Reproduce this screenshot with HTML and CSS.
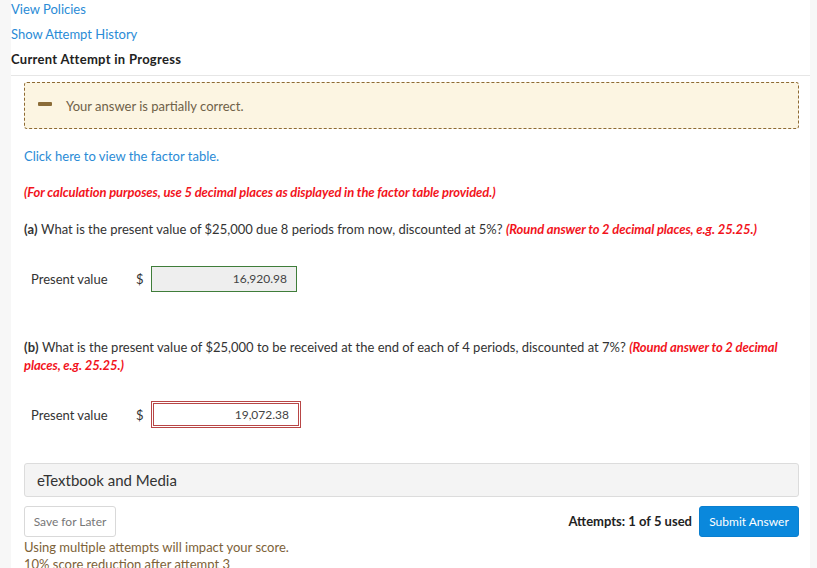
FILE: index.html
```html
<!DOCTYPE html>
<html>
<head>
<meta charset="utf-8">
<link rel="stylesheet" href="styles.css">
</head>
<body>
<div class="page">
  <div class="top">
    <a class="link top-item first">View Policies</a>
    <a class="link top-item">Show Attempt History</a>
    <div class="top-item current">Current Attempt in Progress</div>
  </div>
  <div class="content">
    <div class="alert">
      <span class="minus"></span>
      <span class="alert-text">Your answer is partially correct.</span>
    </div>
    <a class="link factor">Click here to view the factor table.</a>
    <p class="note">(For calculation purposes, use 5 decimal places as displayed in the factor table provided.)</p>
    <p class="question"><b>(a)</b> What is the present value of $25,000 due 8 periods from now, discounted at 5%? <span class="hint">(Round answer to 2 decimal places, e.g. 25.25.)</span></p>
    <div class="answer-row row-a">
      <span class="label">Present value</span>
      <span class="dollar">$</span>
      <div class="input correct">16,920.98</div>
    </div>
    <p class="question qb"><b>(b)</b> What is the present value of $25,000 to be received at the end of each of 4 periods, discounted at 7%? <span class="hint">(Round answer to 2 decimal places, e.g. 25.25.)</span></p>
    <div class="answer-row row-b">
      <span class="label">Present value</span>
      <span class="dollar">$</span>
      <div class="input wrong">19,072.38</div>
    </div>
    <div class="media">eTextbook and Media</div>
    <div class="actions">
      <button class="btn save">Save for Later</button>
      <div class="right">
        <span class="attempts">Attempts: 1 of 5 used</span>
        <button class="btn submit">Submit Answer</button>
      </div>
    </div>
    <p class="warn">Using multiple attempts will impact your score.<br>10% score reduction after attempt 3</p>
  </div>
</div>
</body>
</html>
```
FILE: styles.css
```css
html, body {
  margin: 0;
  padding: 0;
  overflow: hidden;
}
body {
  background: #f7f7f7;
  font-family: Lato, "Open Sans", sans-serif;
  font-size: 13px;
  color: #333;
  padding: 0 7px 0 11px;
}
.page {
  background: #fff;
  min-height: 100vh;
}
.link {
  color: #2a8bd6;
  text-decoration: none;
  display: block;
}
.top {
  border-bottom: 1px solid #e6e6e6;
  padding-bottom: 3px;
}
.top-item {
  height: 25px;
  line-height: 25px;
}
.top-item.first {
  margin-top: -3px;
}
.current {
  font-weight: bold;
  color: #222;
  letter-spacing: 0.3px;
}
.content {
  padding: 6px 11px 40px 13px;
}
.alert {
  background: #fcf5e2;
  border: 1px dashed #8d6a33;
  border-radius: 3px;
  height: 45px;
  display: flex;
  align-items: center;
  padding-left: 13px;
}
.minus {
  width: 14px;
  height: 4px;
  background: #8b6c38;
  border-radius: 1px;
  margin-right: 14px;
  margin-top: -4px;
}
.alert-text {
  color: #6f6148;
  margin-top: 1px;
}
.factor {
  margin-top: 18px;
  line-height: 18px;
}
.note {
  margin: 18px 0 0;
  line-height: 18px;
  color: #f2141c;
  font-weight: bold;
  font-style: italic;
  letter-spacing: -0.1px;
}
.question {
  margin: 19px 0 0;
  line-height: 18px;
}
.question b {
  letter-spacing: 0.2px;
}
.hint {
  color: #f2141c;
  font-weight: bold;
  font-style: italic;
  letter-spacing: -0.1px;
}
.answer-row {
  display: flex;
  align-items: center;
  padding-left: 7px;
}
.row-a {
  margin-top: 28px;
}
.row-b {
  margin-top: 27px;
}
.label {
  width: 105px;
}
.dollar {
  width: 15px;
}
.input {
  box-sizing: border-box;
  text-align: right;
  font-size: 12px;
  color: #444;
}
.input.correct {
  width: 146px;
  height: 26px;
  line-height: 24px;
  border: 1px solid #3f7d3a;
  background: #eeeeee;
  padding-right: 9px;
}
.input.wrong {
  width: 150px;
  height: 27px;
  line-height: 21px;
  border: 3px double #b84646;
  background: #fff;
  padding-right: 9px;
}
.qb {
  margin-top: 46px;
}
.media {
  margin-top: 35px;
  height: 34px;
  box-sizing: border-box;
  background: #f4f4f4;
  border: 1px solid #dcdcdc;
  border-radius: 3px;
  line-height: 32px;
  padding-left: 12px;
  font-size: 15px;
  color: #333;
}
.actions {
  margin-top: 9px;
  display: flex;
  justify-content: space-between;
  align-items: flex-start;
}
.btn {
  font-family: Lato, "Open Sans", sans-serif;
  font-size: 12px;
  border-radius: 3px;
  cursor: pointer;
}
.save {
  width: 92px;
  height: 31px;
  background: #fff;
  border: 1px solid #d9d9d9;
  color: #777;
  padding: 0;
}
.right {
  display: flex;
  align-items: center;
  gap: 7px;
}
.attempts {
  font-weight: bold;
  color: #222;
  margin-top: -2px;
}
.submit {
  width: 100px;
  height: 31px;
  background: #0a88dc;
  border: 1px solid #0a7fcf;
  color: #fff;
  padding: 0;
}
.warn {
  margin: 2px 0 0;
  color: #7d6238;
  line-height: 17px;
}
```
